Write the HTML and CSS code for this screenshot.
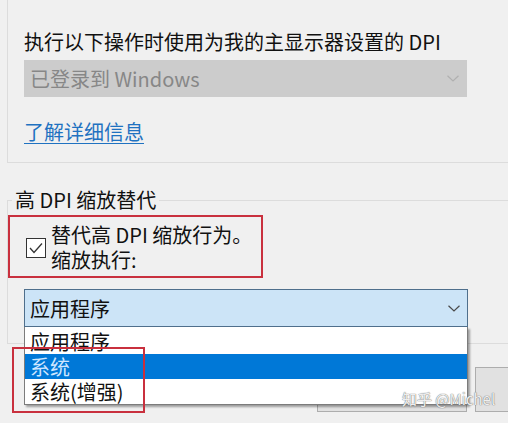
FILE: index.html
```html
<!DOCTYPE html>
<html lang="zh-CN">
<head>
<meta charset="utf-8">
<title>高 DPI 设置</title>
<link rel="stylesheet" href="styles.css">
</head>
<body>
<div class="page">
  <div class="group1">
    <div class="label">执行以下操作时使用为我的主显示器设置的 DPI</div>
    <div class="combo combo-disabled">
      <span>已登录到 Windows</span>
      <svg class="chev" width="12" height="7" viewBox="0 0 12 7"><polyline points="0.5,0.8 6,6 11.5,0.8" fill="none" stroke="#b0b0b0" stroke-width="1.2"/></svg>
    </div>
    <div class="link">了解详细信息</div>
  </div>

  <div class="group2">
    <div class="legend">高 DPI 缩放替代</div>
    <div class="checkrow">
      <svg class="checkbox" width="20" height="20" viewBox="0 0 20 20"><rect x="0.5" y="0.5" width="19" height="19" fill="#fff" stroke="#333" stroke-width="1"/><polyline points="4,10 8,14.5 16,5.5" fill="none" stroke="#333" stroke-width="1.3"/></svg>
      <div class="checktext">替代高 DPI 缩放行为。<br>缩放执行:</div>
    </div>
    <div class="combo-wrap">
      <div class="combo combo-active">
        <span>应用程序</span>
        <svg class="chev" width="12" height="7" viewBox="0 0 12 7"><polyline points="0.5,0.8 6,6 11.5,0.8" fill="none" stroke="#4a4a4a" stroke-width="1.2"/></svg>
      </div>
      <ul class="list">
        <li class="item item-first">应用程序</li>
        <li class="item item-sel">系统</li>
        <li class="item">系统(增强)</li>
      </ul>
      <div class="mark2"></div>
    </div>
  </div>

  <div class="buttons">
    <div class="btn btn-ok"></div>
    <div class="btn btn-cancel"></div>
  </div>

  <div class="watermark">知乎 @Michel</div>
</div>
</body>
</html>
```

FILE: styles.css
```css
html, body {
  margin: 0;
  padding: 0;
}
body {
  background: #f0f0f0;
  width: 508px;
  height: 423px;
  overflow: hidden;
  font-family: "Noto Sans CJK SC", "Noto Sans", sans-serif;
  font-size: 20px;
  color: #111;
}
.page {
  position: relative;
  width: 508px;
  height: 423px;
  overflow: hidden;
}
.group1 {
  margin-left: 7px;
  border-left: 1px solid #dcdcdc;
  border-bottom: 1px solid #dcdcdc;
  padding: 29px 0 17px 16px;
}
.label {
  line-height: 26px;
  white-space: nowrap;
}
.combo {
  box-sizing: border-box;
  display: flex;
  align-items: center;
  justify-content: space-between;
  white-space: nowrap;
}
.combo-disabled {
  width: 443px;
  height: 37px;
  margin-top: 5px;
  background: #cccccc;
  color: #878787;
  padding: 0 8px 0 6px;
}
.link {
  margin-top: 22px;
  line-height: 26px;
  color: #1f72c1;
  text-decoration: underline;
  text-underline-offset: 3px;
  text-decoration-thickness: 1px;
  width: fit-content;
}
.group2 {
  margin: 37px 0 0 7px;
  border-top: 1px solid #dcdcdc;
  border-left: 1px solid #dcdcdc;
  border-bottom: 1px solid #dcdcdc;
  padding-bottom: 16px;
}
.legend {
  width: fit-content;
  margin: -14px 0 0 4px;
  padding: 0 3px;
  background: #f0f0f0;
  line-height: 26px;
  white-space: nowrap;
}
.checkrow {
  box-sizing: border-box;
  width: 255px;
  height: 63px;
  margin-top: 2px;
  border: 2px solid #c9303e;
  padding: 5px 0 4px 16px;
  display: flex;
  align-items: center;
  gap: 5px;
}
.checkbox {
  flex: none;
  margin-top: 2px;
}
.checktext {
  line-height: 25px;
  white-space: nowrap;
}
.combo-wrap {
  position: relative;
  margin: 11px 0 0 16px;
  width: 444px;
}
.combo-active {
  width: 444px;
  height: 38px;
  background: #cce4f7;
  border: 1px solid #4f6f8c;
  padding: 0 7px 0 5px;
}
.list {
  position: absolute;
  z-index: 2;
  left: 0;
  top: 100%;
  box-sizing: border-box;
  width: 444px;
  margin: 0;
  padding: 0;
  list-style: none;
  background: #fff;
  border: 1px solid #7c7c7c;
  border-top: none;
  box-shadow: 2px 2px 2px rgba(0, 0, 0, 0.35);
}
.item {
  height: 25px;
  line-height: 25px;
  padding-left: 5px;
  white-space: nowrap;
}
.item-first {
  height: 27px;
  line-height: 29px;
}
.item-sel {
  background: #0078d7;
  color: #cfe6ff;
}
.mark2 {
  position: absolute;
  z-index: 3;
  left: -12px;
  top: 58px;
  width: 133px;
  height: 66px;
  box-sizing: border-box;
  border: 2px solid #c9303e;
}
.buttons {
  display: flex;
  justify-content: flex-start;
  gap: 8px;
  margin: 23px 0 0 317px;
}
.btn {
  flex: none;
  box-sizing: border-box;
  width: 150px;
  height: 45px;
  background: #e1e1e1;
  border: 1px solid #adadad;
}
.watermark {
  position: absolute;
  z-index: 5;
  left: 402px;
  top: 390px;
  font-size: 15px;
  line-height: 18px;
  color: rgba(255, 255, 255, 0.9);
  text-shadow: 0 0 1px #777, 0 0 1px #777;
  white-space: nowrap;
}
```
